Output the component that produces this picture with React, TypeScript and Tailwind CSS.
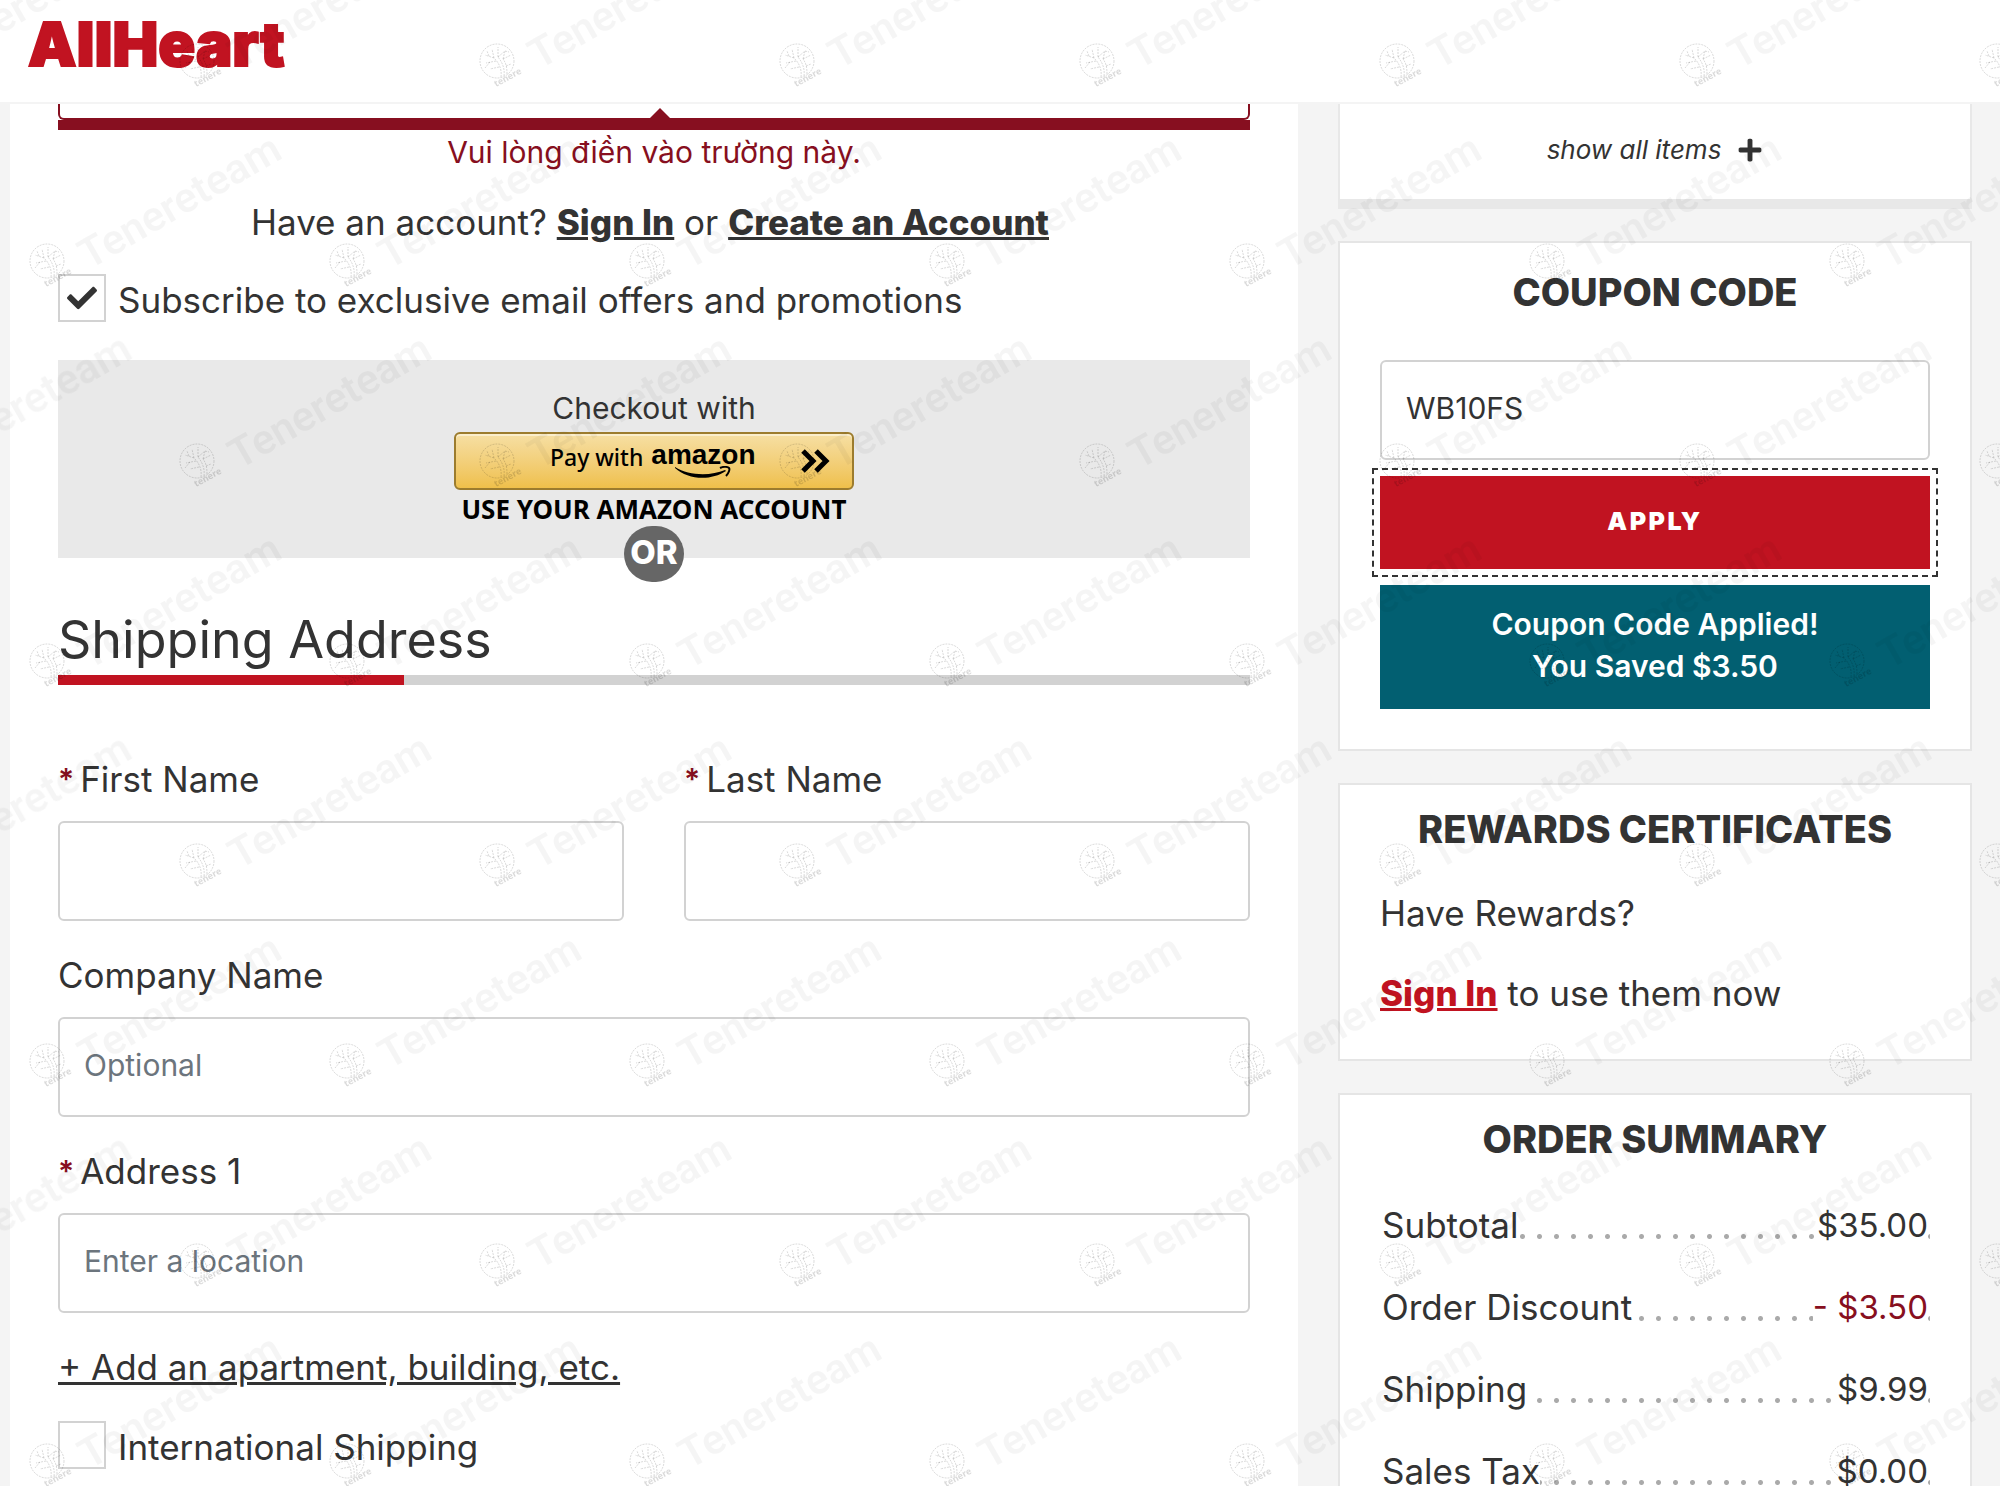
import { useState } from 'react'
import type { ReactNode } from 'react'
import { FaCheck, FaPlus } from 'react-icons/fa'

const summary = [
  { label: 'Subtotal', value: '$35.00', discount: false },
  { label: 'Order Discount', value: '- $3.50', discount: true },
  { label: 'Shipping', value: '$9.99', discount: false },
  { label: 'Sales Tax', value: '$0.00', discount: false },
]

const inputClass =
  'h-[100px] w-full rounded-md border-2 border-[#d2d2d2] bg-white px-6 pb-1 text-3xl text-[#333] outline-none placeholder:text-[#6c757d]'

function Field({ id, label, required, placeholder }: { id: string; label: string; required?: boolean; placeholder?: string }) {
  return (
    <div>
      <label htmlFor={id} className="flex h-16 items-start gap-1.5">
        {required && <span className="text-3xl leading-[44px] font-semibold text-[#870f20]">*</span>}
        {label}
      </label>
      <input id={id} type="text" placeholder={placeholder} className={inputClass} />
    </div>
  )
}

function CheckField({ label, checked, onChange }: { label: string; checked: boolean; onChange: (value: boolean) => void }) {
  return (
    <label className="flex items-center gap-3">
      <span className="grid size-12 shrink-0 place-items-center">
        <input
          type="checkbox"
          checked={checked}
          onChange={(e) => onChange(e.target.checked)}
          className="size-12 appearance-none border-2 border-[#d2d2d2] bg-white [grid-area:1/1]"
        />
        {checked && <FaCheck className="pointer-events-none size-[30px] [grid-area:1/1]" />}
      </span>
      <span className="pt-1">{label}</span>
    </label>
  )
}

function Card({ title, children }: { title: string; children: ReactNode }) {
  return (
    <section className="border-2 border-[#e5e5e5] bg-white px-10 pt-5">
      <h2 className="text-center text-[38px] leading-[48px] font-extrabold">{title}</h2>
      {children}
    </section>
  )
}

function AmazonButton() {
  return (
    <button
      type="button"
      className="grid h-[58px] w-[400px] shrink-0 grid-cols-[1fr_auto] items-center rounded-md border-2 border-[#9c7c2e] bg-linear-to-b from-[#f6dfa3] to-[#efc04a] pr-[22px] pl-[94px] font-['Noto_Sans',sans-serif] text-black inset-shadow-[0_2px_0_#fbeecb]"
    >
      <span className="flex items-start gap-2 pb-1">
        <span className="text-[23px] leading-[34px] font-medium">Pay with</span>
        <span className="flex flex-col items-center">
          <span className="font-['Liberation_Sans',sans-serif] text-[28px] leading-[30px] font-bold">amazon</span>
          <svg width="56" height="13" viewBox="0 0 56 13" className="-mt-1" aria-hidden="true">
            <path d="M0 1C14 10 36 10 50 4l1 1C36 15 13 14 0 2z" fill="currentColor" />
            <path d="M45 2c4-2 8-1 9 0s0 5-3 8" fill="none" stroke="currentColor" strokeWidth="2" />
          </svg>
        </span>
      </span>
      <svg width="30" height="24" viewBox="0 0 30 24" fill="none" stroke="currentColor" strokeWidth="5" aria-hidden="true">
        <path d="M3 2l10 10L3 22M16 2l10 10-10 10" />
      </svg>
    </button>
  )
}

const marks: { x: number; y: number }[] = []
for (let row = 0; row < 8; row++) {
  for (let col = -1; col < 7; col++) {
    marks.push({ x: col * 300 + (row % 2 === 0 ? 197 : 47), y: 61 + row * 200 })
  }
}

function Watermark() {
  return (
    <svg className="pointer-events-none fixed inset-0 z-20 h-full w-full" aria-hidden="true">
      {marks.map((m) => (
        <g key={`${m.x}-${m.y}`} transform={`translate(${m.x} ${m.y})`}>
          <g fill="none" stroke="#000" strokeOpacity="0.15" strokeWidth="1" strokeDasharray="2 1">
            <circle r="17" />
            <path d="M4 16C5 8 2 2-3-3M7 15C8 7 5 1 1-4M10 13C10 6 9 2 6-2M-3-3l-9-3M-3-3l-2-9M1-4V-14M1-4l7-6M6-2l8-4M6-2l2-8M-1 0l-10 2M2 6l-9 2M9 5l5-2M-8-5l-2-5M8-10l4 1M-7 1l-5 6" />
          </g>
          <text transform="translate(-1 26) rotate(-28)" className="fill-black/15 font-['Noto_Sans',sans-serif] text-[9px] font-bold">
            tenere
          </text>
          <text transform="translate(42 9) rotate(-30)" className="fill-black/4 font-[Roboto,sans-serif] text-[42px] font-semibold">
            Tenereteam
          </text>
        </g>
      ))}
    </svg>
  )
}

export default function App() {
  const [subscribe, setSubscribe] = useState(true)
  const [international, setInternational] = useState(false)
  const [coupon, setCoupon] = useState('WB10FS')

  return (
    <div className="flex h-screen flex-col overflow-hidden bg-[#f4f4f4] font-[Inter,'Noto_Sans',sans-serif] text-[35px] leading-[44px] text-[#333]">
      <header className="flex h-[104px] shrink-0 items-start border-b-2 border-[#f4f4f4] bg-white px-7 pt-[9px]">
        <a href="#" className="text-[61px] leading-[70px] font-black text-[#c11321] [-webkit-text-stroke:2px_#c11321]">AllHeart</a>
      </header>

      <div className="grid min-h-0 flex-1 grid-cols-[1288fr_634fr] gap-10 pr-7 pl-[10px]">
        <main className="bg-white px-12">
          <div className="flex flex-col">
            <input
              type="email"
              aria-label="Email"
              className="h-4 w-full rounded-b-md border-2 border-t-0 border-[#870f20] bg-white px-6 outline-none"
            />
            <div className="relative h-[10px] bg-[#870f20]">
              <span className="absolute bottom-full left-1/2 size-0 -translate-x-1.5 border-x-12 border-b-12 border-x-transparent border-b-[#870f20]" />
            </div>
            <p className="text-center text-3xl leading-[44px] text-[#870f20]">Vui lòng điền vào trường này.</p>
          </div>

          <p className="mt-[26px] pr-2 text-center">
            Have an account?{' '}
            <a href="#" className="font-extrabold underline">Sign In</a> or{' '}
            <a href="#" className="font-extrabold underline">Create an Account</a>
          </p>

          <div className="mt-[30px]">
            <CheckField label="Subscribe to exclusive email offers and promotions" checked={subscribe} onChange={setSubscribe} />
          </div>

          <div className="mt-[38px] flex h-[198px] flex-col items-center bg-[#e9e9e9] pt-[26px]">
            <p className="text-3xl leading-[44px]">Checkout with</p>
            <div className="mt-0.5">
              <AmazonButton />
            </div>
            <p className="pt-0.5 font-['Noto_Sans',sans-serif] text-[26px] leading-[34px] font-bold text-black">USE YOUR AMAZON ACCOUNT</p>
            <span className="flex h-14 w-[60px] shrink-0 items-center justify-center rounded-[28px] bg-[#666] pb-1 text-[33px] font-extrabold text-white">OR</span>
          </div>

          <h1 className="mt-12 text-[52px] leading-[67px]">Shipping Address</h1>
          <div className="mt-0.5 h-[10px] bg-[#d2d2d2]">
            <div className="h-full w-[29%] bg-[#c11321]" />
          </div>

          <form className="mt-[72px] flex flex-col gap-8">
            <div className="grid grid-cols-2 gap-[60px]">
              <Field id="first-name" label="First Name" required />
              <Field id="last-name" label="Last Name" required />
            </div>
            <Field id="company" label="Company Name" placeholder="Optional" />
            <Field id="address" label="Address 1" required placeholder="Enter a location" />
          </form>

          <a href="#" className="mt-8 block w-fit underline">+ Add an apartment, building, etc.</a>
          <div className="mt-8">
            <CheckField label="International Shipping" checked={international} onChange={setInternational} />
          </div>
        </main>

        <aside className="flex flex-col gap-8">
          <div className="flex h-[105px] shrink-0 justify-center border-x-2 border-b-10 border-[#e8e8e8] bg-white pt-[26px]">
            <button type="button" className="flex h-10 items-center gap-4 text-[26px] italic">
              show all items
              <FaPlus className="size-[26px]" />
            </button>
          </div>

          <section className="border-2 border-[#e5e5e5] bg-white px-10 pt-[25px] pb-10">
            <h2 className="text-center text-[38px] leading-[48px] font-extrabold">COUPON CODE</h2>
            <input
              type="text"
              aria-label="Coupon code"
              value={coupon}
              onChange={(e) => setCoupon(e.target.value)}
              className={`mt-11 ${inputClass}`}
            />
            <button
              type="button"
              className="mt-4 h-[93px] w-full bg-[#c11321] pb-1 text-[25px] font-black tracking-widest text-white outline-2 outline-offset-6 outline-[#333] outline-dashed"
            >
              APPLY
            </button>
            <p className="mt-4 bg-[#025f71] pt-[18px] pb-[22px] text-center text-3xl leading-[42px] font-semibold text-white">
              Coupon Code Applied!
              <br />
              You Saved $3.50
            </p>
          </section>

          <Card title="REWARDS CERTIFICATES">
            <p className="mt-[38px]">Have Rewards?</p>
            <p className="mt-9 pb-11">
              <a href="#" className="font-extrabold text-[#c11321] underline">Sign In</a> to use them now
            </p>
          </Card>

          <Card title="ORDER SUMMARY">
            <dl className="mt-10 flex flex-col gap-[38px]">
              {summary.map((item) => (
                <div
                  key={item.label}
                  className="flex justify-between bg-[radial-gradient(circle,#aaa_2px,transparent_3px)] bg-[length:17px_17px] bg-[position:right_-9px_bottom_2px] bg-repeat-x"
                >
                  <dt className="bg-white pl-0.5">{item.label}</dt>
                  <dd className={`mr-0.5 bg-white text-[33px] ${item.discount ? 'text-[#870f20]' : ''}`}>{item.value}</dd>
                </div>
              ))}
            </dl>
          </Card>
        </aside>
      </div>
      <Watermark />
    </div>
  )
}
